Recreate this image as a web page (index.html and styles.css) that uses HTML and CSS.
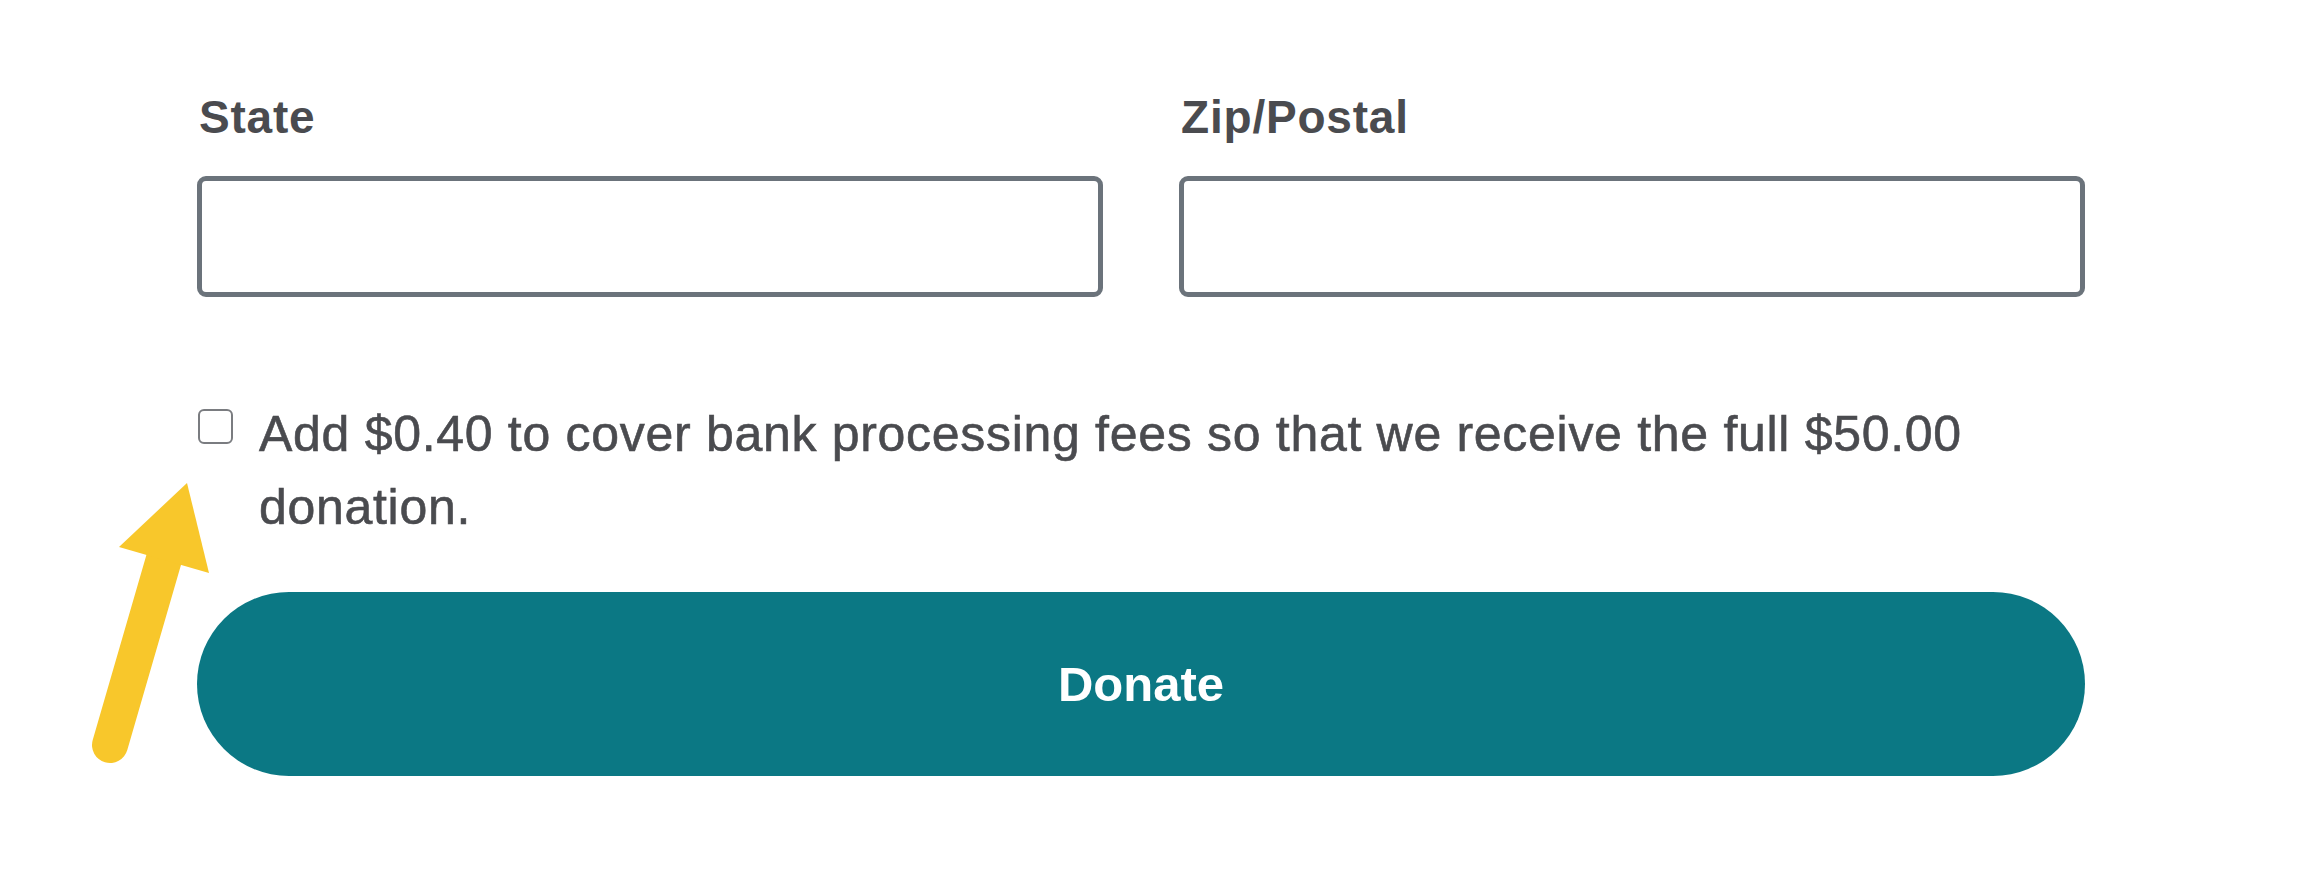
FILE: index.html
```html
<!doctype html>
<html>
 <head>
  <title>Donation Form</title>
  <link rel="stylesheet" href="styles.css">
 </head>
 <body>
  <form class="donate-form">
   <div class="field-row">
    <div class="field">
     <label for="state-input">State</label>
     <input type="text" id="state-input">
    </div>
    <div class="field">
     <label for="zip-input">Zip/Postal</label>
     <input type="text" id="zip-input">
    </div>
   </div>
   <label class="fee-option" for="fee-check">
    <input type="checkbox" id="fee-check">
    <span>Add $0.40 to cover bank processing fees so that we receive the full $50.00 donation.</span>
   </label>
   <button type="button" class="donate-btn">Donate</button>
  </form>
  <svg class="pointer-arrow" width="240" height="800" viewBox="0 0 240 800">
   <line x1="110" y1="745" x2="166" y2="552" stroke="#f8c72b" stroke-width="36" stroke-linecap="round"/>
   <polygon points="187,483 119,547 209,573" fill="#f8c72b"/>
  </svg>
 </body>
</html>
```
FILE: styles.css
```css
body {
  background-color: #fff;
  color: #4a4b4f;
  font-family: "Liberation Sans", Arial, sans-serif;
  margin: 0;
}

.donate-form {
  width: 1888px;
  margin-left: 197px;
  padding-top: 85px;
}

.field-row {
  display: grid;
  grid-template-columns: 1fr 1fr;
  column-gap: 76px;
}

.field label {
  display: block;
  font-size: 46px;
  font-weight: bold;
  letter-spacing: 0.8px;
  line-height: 64px;
  margin-bottom: 27px;
  padding-left: 2px;
}

.field input[type="text"] {
  display: block;
  box-sizing: border-box;
  width: 100%;
  height: 121px;
  border: 5px solid #6b737b;
  border-radius: 9px;
  background-color: #fff;
  margin: 0;
}

.fee-option {
  display: flex;
  align-items: flex-start;
  margin-top: 101px;
  font-size: 50px;
  letter-spacing: 0.7px;
  line-height: 73px;
  -webkit-text-stroke: 0.6px #4a4b4f;
}

.fee-option input[type="checkbox"] {
  appearance: none;
  flex: none;
  box-sizing: border-box;
  width: 35px;
  height: 35px;
  margin: 11px 26px 0 1px;
  border: 2px solid #7a7c80;
  border-radius: 6px;
  background-color: #fff;
}

.donate-btn {
  display: block;
  width: 100%;
  height: 184px;
  margin-top: 48px;
  border: none;
  border-radius: 999px;
  background-color: #0b7884;
  color: #fff;
  font-family: "Liberation Sans", Arial, sans-serif;
  font-size: 49px;
  font-weight: bold;
  cursor: pointer;
}

.pointer-arrow {
  position: absolute;
  left: 0;
  top: 0;
}
```
